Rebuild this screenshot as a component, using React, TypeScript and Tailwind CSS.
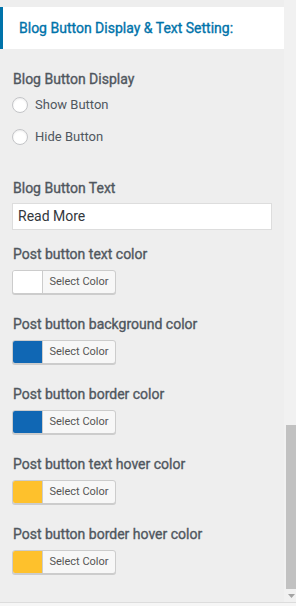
import React from "react";

const font = { fontFamily: "Roboto, 'Liberation Sans', sans-serif" };

function Label({ children, className = "" }: { children: React.ReactNode; className?: string }) {
  return (
    <div className={`pl-[13px] text-[14px] leading-[20px] font-normal [-webkit-text-stroke:0.35px_#50575e] text-[#50575e] ${className}`}>{children}</div>
  );
}

function Radio({ label }: { label: string }) {
  return (
    <div className="flex items-center h-[32px] pl-[12px]">
      <span className="w-[16px] h-[16px] rounded-full bg-white border border-[#c3c4c7] shadow-[inset_0_1px_2px_rgba(0,0,0,0.08)]" />
      <span className="ml-[7px] text-[13px] text-[#50575e]">{label}</span>
    </div>
  );
}

function ColorButton({ color }: { color: string }) {
  return (
    <div className="ml-[12px] mt-[6px] flex w-[104px] h-[24px] rounded-[3px] border border-[#cccccc] shadow-[0_1px_0_#cccccc] overflow-hidden bg-[#f7f7f7]">
      <div className="w-[30px] h-full border-r border-[#cccccc]" style={{ backgroundColor: color }} />
      <div className="flex-1 flex items-center justify-center text-[11px] text-[#555555]">Select Color</div>
    </div>
  );
}

const colors = [
  { label: "Post button text color", color: "#ffffff" },
  { label: "Post button background color", color: "#1067b4" },
  { label: "Post button border color", color: "#1067b4" },
  { label: "Post button text hover color", color: "#fec12c" },
  { label: "Post button border hover color", color: "#fec12c" },
];

export default function App() {
  return (
    <div className="w-[296px] h-[606px] flex flex-col bg-[#eeeeee] overflow-hidden" style={font}>
      <div className="flex flex-1 min-h-0">
        <div className="w-[284px] flex flex-col">
          <div className="mt-[7px] h-[42px] bg-white border-l-[3px] border-[#0073aa] flex items-center pl-[16px]">
            <span className="text-[14px] font-normal [-webkit-text-stroke:0.35px_#0073aa] text-[#0073aa]">Blog Button Display &amp; Text Setting:</span>
          </div>
          <Label className="mt-[20px]">Blog Button Display</Label>
          <Radio label="Show Button" />
          <Radio label="Hide Button" />
          <Label className="mt-[25px]">Blog Button Text</Label>
          <div className="ml-[12px] mt-[5px] w-[260px] h-[27px] bg-white border border-[#dddddd] flex items-center pl-[5px] text-[14px] text-[#32373c]">
            Read More
          </div>
          {colors.map((c, i) => (
            <div key={c.label} className={i === 0 ? "mt-[14px]" : "mt-[20px]"}>
              <Label>{c.label}</Label>
              <ColorButton color={c.color} />
            </div>
          ))}
        </div>
        <div className="w-[12px] bg-[#f1f1f1] flex flex-col">
          <div className="h-[425px]" />
          <div className="ml-[2px] w-[10px] h-[164px] bg-[#c1c1c1]" />
          <div className="flex-1 flex items-center justify-center pl-[2px]">
            <svg width="7" height="4" viewBox="0 0 7 4"><path d="M0 0h7L3.5 4z" fill="#a3a3a3" /></svg>
          </div>
        </div>
      </div>
      <div className="h-[1px] bg-[#dcdcdc]" />
      <div className="h-[3px] bg-[#f6f6f6]" />
    </div>
  );
}
